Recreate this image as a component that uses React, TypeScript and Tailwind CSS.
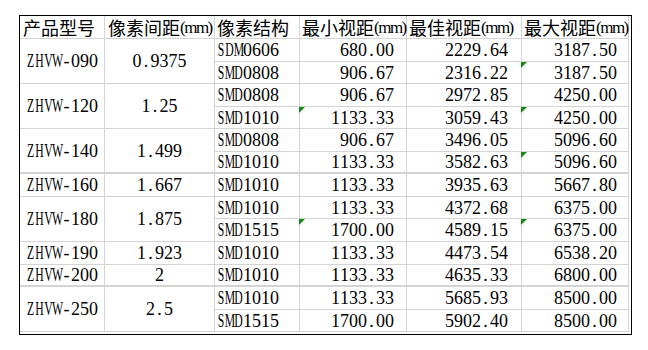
import React from "react";

type Row = {
  s: string;
  a: string;
  b: string;
  c: string;
  ta?: boolean;
  tc?: boolean;
};

type Group = {
  model: string;
  pitch: string;
  rows: Row[];
  thick?: boolean;
};

const groups: Group[] = [
  {
    model: "ZHVW-090",
    pitch: "0.9375",
    rows: [
      { s: "SDM0606", a: "680.00", b: "2229.64", c: "3187.50" },
      { s: "SMD0808", a: "906.67", b: "2316.22", c: "3187.50", tc: true },
    ],
  },
  {
    model: "ZHVW-120",
    pitch: "1.25",
    rows: [
      { s: "SMD0808", a: "906.67", b: "2972.85", c: "4250.00" },
      { s: "SMD1010", a: "1133.33", b: "3059.43", c: "4250.00", ta: true, tc: true },
    ],
  },
  {
    model: "ZHVW-140",
    pitch: "1.499",
    thick: true,
    rows: [
      { s: "SMD0808", a: "906.67", b: "3496.05", c: "5096.60" },
      { s: "SMD1010", a: "1133.33", b: "3582.63", c: "5096.60", tc: true },
    ],
  },
  {
    model: "ZHVW-160",
    pitch: "1.667",
    rows: [{ s: "SMD1010", a: "1133.33", b: "3935.63", c: "5667.80" }],
  },
  {
    model: "ZHVW-180",
    pitch: "1.875",
    rows: [
      { s: "SMD1010", a: "1133.33", b: "4372.68", c: "6375.00" },
      { s: "SMD1515", a: "1700.00", b: "4589.15", c: "6375.00", ta: true, tc: true },
    ],
  },
  {
    model: "ZHVW-190",
    pitch: "1.923",
    rows: [{ s: "SMD1010", a: "1133.33", b: "4473.54", c: "6538.20" }],
  },
  {
    model: "ZHVW-200",
    pitch: "2",
    thick: true,
    rows: [{ s: "SMD1010", a: "1133.33", b: "4635.33", c: "6800.00" }],
  },
  {
    model: "ZHVW-250",
    pitch: "2.5",
    rows: [
      { s: "SMD1010", a: "1133.33", b: "5685.93", c: "8500.00" },
      { s: "SMD1515", a: "1700.00", b: "5902.40", c: "8500.00" },
    ],
  },
];

const headers = ["产品型号", "像素间距", "像素结构", "最小视距", "最佳视距", "最大视距"];

// half-width cells, like the sheet's song-style font
function Mono({ text }: { text: string }) {
  return (
    <span className="inline-flex font-['Liberation_Serif',serif] text-[18px] leading-none whitespace-nowrap">
      {text.split("").map((ch, i) => (
        <span key={i} className="inline-flex w-[9px] justify-center">
          {/[A-Z]/.test(ch) ? <span className="scale-x-65">{ch}</span> : ch}
        </span>
      ))}
    </span>
  );
}

function Flag() {
  return (
    <span className="absolute left-[-1px] top-0 w-0 h-0 border-t-[6px] border-r-[6px] border-t-[#138a13] border-r-transparent" />
  );
}

export default function App() {
  return (
    <div className="w-[648px] h-[350px] bg-white pl-[19px] pt-[15px]">
      <div className="w-[613px] border border-black pr-[2px] pb-[2px] text-black">
        <div className="grid grid-cols-[85px_110px_85px_107px_115px_107px] grid-rows-[23px_23px_22px_23px_22px_23px_22px_23px_22px_23px_23px_22px_23px_22px]">
          {headers.map((h, i) => (
            <div
              key={h + i}
              className={`flex items-center whitespace-nowrap border-r border-b border-[#d4d4d4] ${
                i < 2 ? "pl-[3px]" : "pl-[2px]"
              }`}
            >
              <span className="font-['Noto_Sans_CJK_SC',sans-serif] text-[18px] leading-none">{h}</span>
              {i !== 0 && i !== 2 && (
                <span className="font-['Liberation_Serif',serif] text-[17px] leading-none tracking-[-1.5px]">(mm)</span>
              )}
            </div>
          ))}

          {groups.map((g) => {
            const span = g.rows.length === 2 ? "row-span-2" : "";
            const mb = g.thick ? "border-b-2" : "border-b";
            return (
              <React.Fragment key={g.model}>
                <div className={`${span} ${mb} border-r border-[#d4d4d4] flex items-center justify-center`}>
                  <Mono text={g.model} />
                </div>
                <div className={`${span} ${mb} border-r border-[#d4d4d4] flex items-center justify-center`}>
                  <Mono text={g.pitch} />
                </div>
                {g.rows.map((r, ri) => {
                  const last = ri === g.rows.length - 1;
                  const b = g.thick && last ? "border-b-2" : "border-b";
                  const cell = `relative ${b} border-r border-[#d4d4d4] flex items-center`;
                  return (
                    <React.Fragment key={g.model + ri}>
                      <div className={`${cell} pl-[1px]`}>
                        <Mono text={r.s} />
                      </div>
                      <div className={`${cell} justify-end pr-[12px]`}>
                        {r.ta && <Flag />}
                        <Mono text={r.a} />
                      </div>
                      <div className={`${cell} justify-end pr-[13px]`}>
                        <Mono text={r.b} />
                      </div>
                      <div className={`${cell} justify-end pr-[11px]`}>
                        {r.tc && <Flag />}
                        <Mono text={r.c} />
                      </div>
                    </React.Fragment>
                  );
                })}
              </React.Fragment>
            );
          })}
        </div>
      </div>
    </div>
  );
}
